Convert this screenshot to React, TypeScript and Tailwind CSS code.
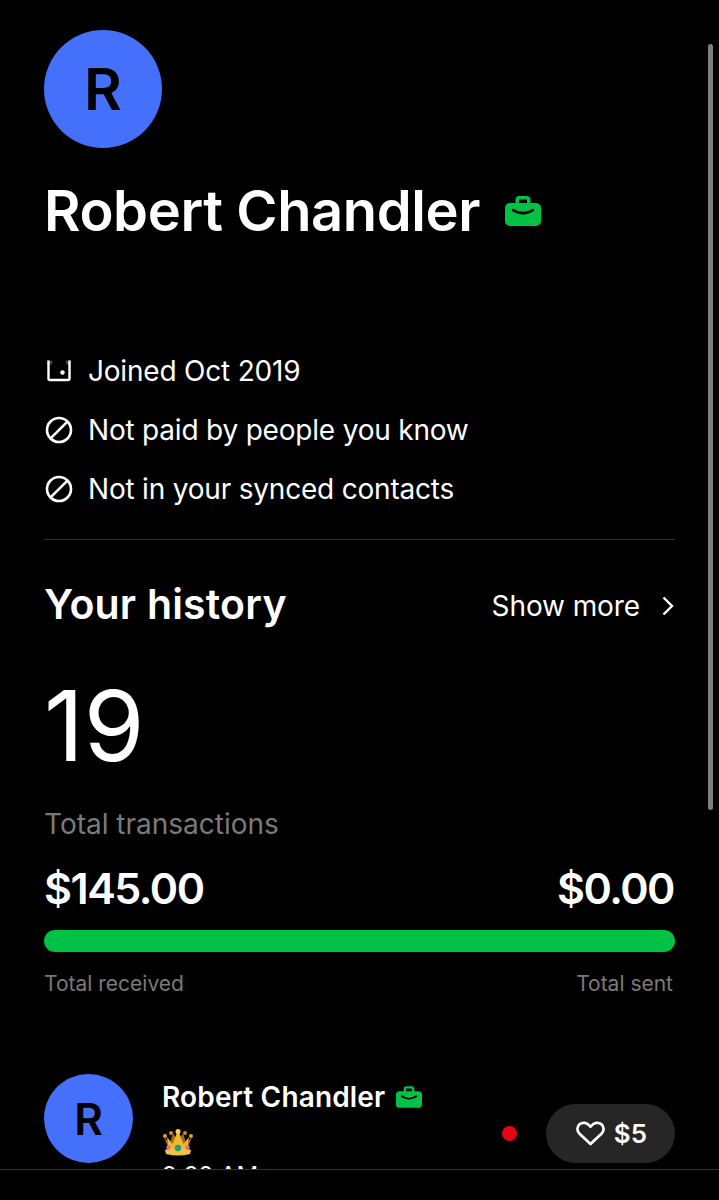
import React from "react";

const Briefcase = ({ className }: { className: string }) => (
  <svg viewBox="0 0 36 30" className={className}>
    <path
      fill="#00c244"
      fillRule="evenodd"
      d="M10.500 7V4a4 4 0 0 1 4-4h7a4 4 0 0 1 4 4v3h5.500a5 5 0 0 1 5 5v13a5 5 0 0 1-5 5H5a5 5 0 0 1-5-5V12a5 5 0 0 1 5-5h5.500Zm3.500 0h8V4.200a.8.8 0 0 0-.8-.8h-6.400a.8.8 0 0 0-.8.8V7Z"
    />
    <path d="M8 14c6 4.200 14 4.200 20 0" fill="none" stroke="#000" strokeWidth="2.600" strokeLinecap="round" />
  </svg>
);

const NotIcon = () => (
  <svg viewBox="0 0 28 28" className="w-[28px] h-[28px] shrink-0" fill="none" stroke="white" strokeWidth="2.600">
    <circle cx="14" cy="14" r="12" />
    <path d="M5.800 22.200 22.200 5.800" />
  </svg>
);

const CalendarIcon = () => (
  <svg viewBox="0 0 28 28" className="w-[28px] h-[28px] shrink-0" fill="none">
    <path d="M3.500 3.500v18a1.500 1.500 0 0 0 1.500 1.500h18a1.500 1.500 0 0 0 1.500-1.500v-18" stroke="white" strokeWidth="2.400" />
    <path d="M2.300 3.500h5v4h-5ZM20.700 3.500h5v4h-5Z" fill="white" opacity="0.25" />
    <circle cx="17.500" cy="15.500" r="2.200" fill="white" />
  </svg>
);

const Crown = () => (
  <svg viewBox="0 0 32 28" className="w-[32px] h-[28px]">
    <path d="M2 9 7 22h18l5-13-6 6-3-10-5 8-5-8-3 10Z" fill="#9a6a14" />
    <path d="M16 2 10.500 16 5 9l2 15h18l2-15-5.500 7Z" fill="#efb62f" />
    <path d="M3 22c8-3 18-3 26 0l-1 4c-8 2-16 2-24 0Z" fill="#f2c341" />
    <circle cx="16" cy="3.500" r="2.500" fill="#f7d354" />
    <circle cx="3" cy="8" r="2" fill="#e0a52a" />
    <circle cx="29" cy="8" r="2" fill="#e0a52a" />
    <circle cx="9" cy="5" r="2" fill="#c98d20" />
    <circle cx="23" cy="5" r="2" fill="#c98d20" />
    <circle cx="16" cy="20" r="3.200" fill="#1f9e77" />
    <circle cx="6.500" cy="19.500" r="2.200" fill="#e0699a" />
    <circle cx="25.500" cy="19.500" r="2.200" fill="#e0699a" />
  </svg>
);

const facts = [
  { icon: <CalendarIcon />, text: "Joined Oct 2019" },
  { icon: <NotIcon />, text: "Not paid by people you know" },
  { icon: <NotIcon />, text: "Not in your synced contacts" },
];

export default function App() {
  return (
    <div className="relative h-[1200px] overflow-hidden bg-black text-white font-['Inter',sans-serif]">
      <div className="pl-[44px] pt-[30px]">
        <div className="w-[118px] h-[118px] rounded-full bg-[#4470fb] flex items-center justify-center text-black text-[58px] font-semibold">
          R
        </div>
        <div className="flex items-center gap-[25px] mt-[25px] h-[76px]">
          <h1 className="text-[56px] font-semibold leading-none tracking-[-0.4px]">Robert Chandler</h1>
          <Briefcase className="w-[36px] h-[30px]" />
        </div>

        <div className="mt-[106px] flex flex-col gap-[27px]">
          {facts.map((f) => (
            <div key={f.text} className="flex items-center gap-[16px] h-[32px] pl-[1px] text-[28px] leading-none tracking-[-0.2px]">
              {f.icon}
              <span className="-ml-[1px]">{f.text}</span>
            </div>
          ))}
        </div>

        <div className="w-[631px] border-t border-[#333] mt-[34px]" />

        <div className="w-[631px]">
          <div className="flex items-center justify-between mt-[39px] h-[50px]">
            <h2 className="text-[41px] font-semibold leading-none tracking-[0.2px]">Your history</h2>
            <div className="flex items-center gap-[21px] text-[28px] mt-[4px] tracking-[-0.1px]">
              Show more
              <svg viewBox="0 0 14 20" className="w-[14px] h-[20px]" fill="none" stroke="white" strokeWidth="2.400">
                <path d="M2.500 1.500 11 10l-8.500 8.500" />
              </svg>
            </div>
          </div>

          <div className="text-[98px] leading-none mt-[48px]">19</div>
          <div className="text-[28px] leading-none text-[#7a7a7a] mt-[35px]">Total transactions</div>

          <div className="flex justify-between mt-[29px] pr-[1px] text-[43px] font-semibold leading-none tracking-[-1.5px]">
            <span>$145.00</span>
            <span>$0.00</span>
          </div>
          <div className="h-[22px] rounded-full bg-[#00c244] mt-[20px]" />
          <div className="flex justify-between mt-[21px] pr-[2px] text-[21px] leading-none text-[#7a7a7a]">
            <span>Total received</span>
            <span>Total sent</span>
          </div>

          <div className="flex items-start mt-[80px]">
            <div className="w-[89px] h-[89px] rounded-full bg-[#4470fb] flex items-center justify-center text-black text-[44px] font-semibold shrink-0">
              R
            </div>
            <div className="ml-[29px] flex-1">
              <div className="flex items-center gap-[11px] text-[28px] font-semibold leading-[34px] mt-[6px] tracking-[0.15px]">
                Robert Chandler
                <Briefcase className="w-[26px] h-[22px]" />
              </div>
              <div className="h-[28px] mt-[14px]">
                <Crown />
              </div>
              <div className="text-[24px] leading-none mt-[8px]">9:32 AM</div>
            </div>
            <div className="flex items-center mt-[30px]">
              <span className="w-[15px] h-[15px] rounded-full bg-[#e30613] mr-[29px]" />
              <div className="w-[129px] h-[59px] pl-[2px] rounded-full bg-[#262626] flex items-center justify-center gap-[9px] text-[26px] font-semibold">
                <svg viewBox="0 0 30 26" className="w-[29px] h-[25px]" fill="none" stroke="white" strokeWidth="2.800" strokeLinejoin="round">
                  <path d="M15 24 3.600 13.200C.4 10 .9 5.500 3.800 3.200c3-2.300 7.700-1.800 11.200 2.800 3.500-4.600 8.200-5.100 11.200-2.800 2.900 2.300 3.400 6.800.2 10Z" />
                </svg>
                $5
              </div>
            </div>
          </div>
        </div>
      </div>

      {/* bottom bar covers the cut off row */}
      <div className="absolute left-0 right-0 bottom-0 h-[31px] bg-black border-t border-[#333]" />
      {/* scrollbar */}
      <div className="absolute left-[708px] top-[44px] w-[5px] h-[766px] rounded-full bg-[#7f7f7f]" />
    </div>
  );
}
